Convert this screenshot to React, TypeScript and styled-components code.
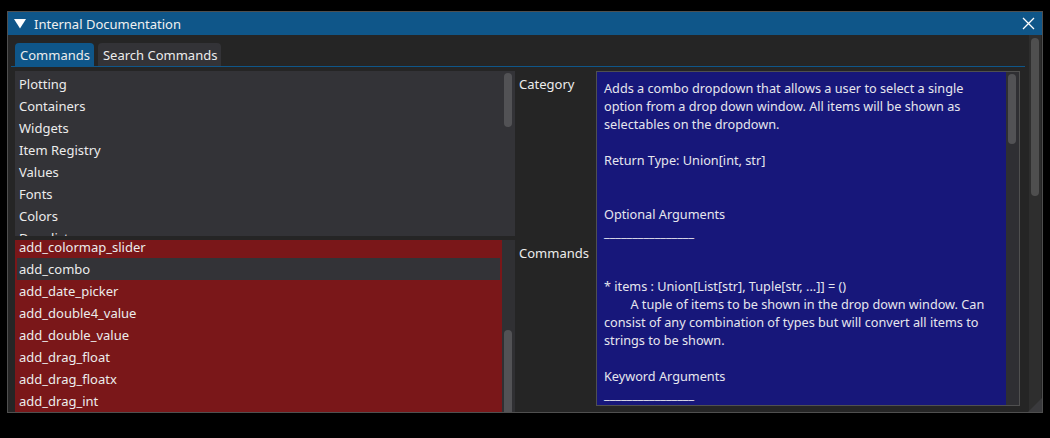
import styled, { createGlobalStyle } from 'styled-components';

const GlobalStyle = createGlobalStyle`
    html, body {
        margin: 0;
        padding: 0;
        background: #000;
        font-family: "Noto Sans", "Open Sans", sans-serif;
        font-size: 13px;
        color: #e8e8e8;
    }
`

const Window = styled.div`
    margin: 11px 0 0 7px;
    width: 1036px;
    height: 402px;
    box-sizing: border-box;
    border: 1px solid #4f4f4f;
    background: #252525;
    display: flex;
    flex-direction: column;
    overflow: hidden;
    position: relative;
`
const TitleBar = styled.div`
    height: 23px;
    flex-shrink: 0;
    background: #0f5689;
    display: flex;
    align-items: center;
    padding: 0 6px;
    gap: 8px;
    color: #f0f0f0;
    font-size: 13px;
    span{
        flex: 1;
    }
`
const Body = styled.div`
    flex: 1;
    display: flex;
    min-height: 0;
`
const Content = styled.div`
    flex: 1;
    padding: 8px 4px 0 7px;
    display: flex;
    flex-direction: column;
    min-width: 0;
`
const TabBar = styled.div`
    display: flex;
    gap: 4px;
    height: 23px;
    flex-shrink: 0;
    margin-left: -4px;
    padding-left: 4px;
    border-bottom: 1px solid #0f5689;
`
const Tab = styled.div<{ $active?: boolean }>`
    padding: 0 4px 0 5px;
    border-radius: 4px 4px 0 0;
    display: flex;
    align-items: center;
    background: ${p => p.$active ? '#0f5689' : '#333337'};
    color: #ececec;
`
const Main = styled.div`
    margin-top: 4px;
    flex: 1;
    display: grid;
    grid-template-columns: 500px 73px 424px;
    grid-template-rows: 165px 1fr;
    column-gap: 4px;
    row-gap: 4px;
    min-height: 0;
`
const ListBox = styled.div`
    display: flex;
    background: #333337;
    overflow: hidden;
    min-height: 0;
`
const ListItems = styled.div<{ $bg: string; $offset: number }>`
    flex: 1;
    background: ${p => p.$bg};
    overflow: hidden;
    > div {
        margin-top: ${p => p.$offset}px;
    }
`
const Row = styled.div<{ $selected?: boolean }>`
    height: 22px;
    line-height: 22px;
    padding-left: 4px;
    white-space: nowrap;
    color: #ececec;
    ${p => p.$selected && `
        background: #333337;
        margin: 0 2px;
        padding-left: 2px;
    `}
`
const ScrollTrack = styled.div<{ $bg: string; $top: number; $height: number }>`
    width: 13px;
    flex-shrink: 0;
    background: ${p => p.$bg};
    position: relative;
    &::after{
        content: '';
        position: absolute;
        left: 2px;
        right: 3px;
        top: ${p => p.$top}px;
        height: ${p => p.$height}px;
        border-radius: 5px;
        background: #525255;
    }
`
const Label = styled.div`
    padding-top: 4px;
    line-height: 18px;
    color: #ececec;
`
const DescBox = styled.div`
    grid-column: 3;
    grid-row: 1 / span 2;
    height: 335px;
    box-sizing: border-box;
    border: 1px solid #505050;
    background: #17177a;
    display: flex;
`
const DescText = styled.div`
    flex: 1;
    padding: 7px 7px;
    white-space: pre-wrap;
    font-size: 12.7px;
    line-height: 18px;
    color: #e6e6ee;
    overflow: hidden;
`
const WindowScroll = styled.div`
    width: 12px;
    margin-right: 1px;
    background: #2e2e2e;
    position: relative;
    &::after{
        content: '';
        position: absolute;
        left: 2px;
        right: 2px;
        top: 3px;
        height: 158px;
        border-radius: 5px;
        background: #4f4f4f;
    }
`
const Grip = styled.div`
    position: absolute;
    right: 0;
    bottom: 0;
    width: 0;
    height: 0;
    border-left: 14px solid transparent;
    border-bottom: 14px solid #3a3a3d;
`

const categories = ['Plotting', 'Containers', 'Widgets', 'Item Registry', 'Values', 'Fonts', 'Colors', 'Drawlist']
const commands = ['add_colormap_slider', 'add_combo', 'add_date_picker', 'add_double4_value', 'add_double_value', 'add_drag_float', 'add_drag_floatx', 'add_drag_int']

const description = [
    'Adds a combo dropdown that allows a user to select a single',
    'option from a drop down window. All items will be shown as',
    'selectables on the dropdown.',
    '',
    'Return Type: Union[int, str]',
    '',
    '',
    'Optional Arguments',
    '________________',
    '',
    '',
    '* items : Union[List[str], Tuple[str, ...]] = ()',
    '        A tuple of items to be shown in the drop down window. Can',
    'consist of any combination of types but will convert all items to',
    'strings to be shown.',
    '',
    'Keyword Arguments',
    '________________',
].join('\n')

export default function App() {
    return (
        <>
            <GlobalStyle />
            <Window>
                <TitleBar>
                    <svg width="12" height="10" viewBox="0 0 12 10">
                        <polygon points="0,0 12,0 6,9.5" fill="#fff" />
                    </svg>
                    <span>Internal Documentation</span>
                    <svg width="13" height="13" viewBox="0 0 13 13" style={{ marginRight: 1 }}>
                        <path d="M1 1 L12 12 M12 1 L1 12" stroke="#fff" strokeWidth="1.3" />
                    </svg>
                </TitleBar>
                <Body>
                    <Content>
                        <TabBar>
                            <Tab $active>Commands</Tab>
                            <Tab>Search Commands</Tab>
                        </TabBar>
                        <Main>
                            <ListBox>
                                <ListItems $bg="#333337" $offset={2}>
                                    <div>
                                        {categories.map(c => <Row key={c}>{c}</Row>)}
                                    </div>
                                </ListItems>
                                <ScrollTrack $bg="#333337" $top={2} $height={54} />
                            </ListBox>
                            <Label>Category</Label>
                            <DescBox>
                                <DescText>{description}</DescText>
                                <ScrollTrack $bg="#2f2f33" $top={2} $height={70} />
                            </DescBox>
                            <ListBox>
                                <ListItems $bg="#7a1719" $offset={-4}>
                                    <div>
                                        {commands.map(c => <Row key={c} $selected={c === 'add_combo'}>{c}</Row>)}
                                    </div>
                                </ListItems>
                                <ScrollTrack $bg="#303033" $top={90} $height={120} />
                            </ListBox>
                            <Label>Commands</Label>
                        </Main>
                    </Content>
                    <WindowScroll />
                </Body>
                <Grip />
            </Window>
        </>
    )
}
